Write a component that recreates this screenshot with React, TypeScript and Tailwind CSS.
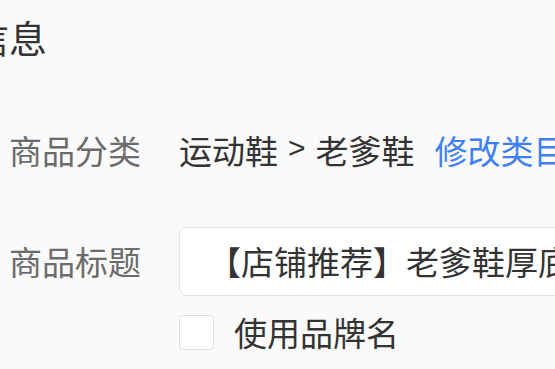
export default function App() {
  return (
    <div className="h-[369px] w-[555px] overflow-hidden bg-[#fafafa] font-['Noto_Sans_CJK_SC','Noto_Sans',sans-serif]">
      <div className="pl-[9px]">
        <h2 className="ml-[-38px] box-content flex h-[38px] items-center whitespace-nowrap pt-[18px] text-[38px] font-normal leading-none text-[#333]">
          信息
        </h2>

        <div className="mt-[64px] flex h-[60px] items-center whitespace-nowrap">
          <span className="w-[170px] shrink-0 text-[33px] leading-none text-[#6b6b6b]">商品分类</span>
          <span className="flex items-center text-[33px] leading-none text-[#333]">
            运动鞋
            <span className="mx-[10px] -translate-y-[2px] text-[30px] font-['Liberation_Sans',sans-serif]">&gt;</span>
            老爹鞋
          </span>
          <button type="button" className="ml-[20px] text-[33px] leading-none text-[#3e7ff3]">
            修改类目
          </button>
        </div>

        <div className="mt-[47px] flex h-[69px] items-center whitespace-nowrap">
          <span className="w-[170px] shrink-0 text-[33px] leading-none text-[#6b6b6b]">商品标题</span>
          <div className="flex h-[69px] w-[520px] shrink-0 items-center rounded-[8px] border border-[#e3e3e3] bg-white pl-[28px]">
            <span className="text-[33px] leading-none text-[#333]">【店铺推荐】老爹鞋厚底增高运动鞋</span>
          </div>
        </div>

        <label className="ml-[170px] mt-[19px] flex h-[35px] items-center gap-[20px] whitespace-nowrap">
          <span className="h-[35px] w-[35px] shrink-0 rounded-[4px] border border-[#dedede] bg-white" />
          <span className="text-[33px] leading-none text-[#333]">使用品牌名</span>
        </label>
      </div>
    </div>
  );
}
